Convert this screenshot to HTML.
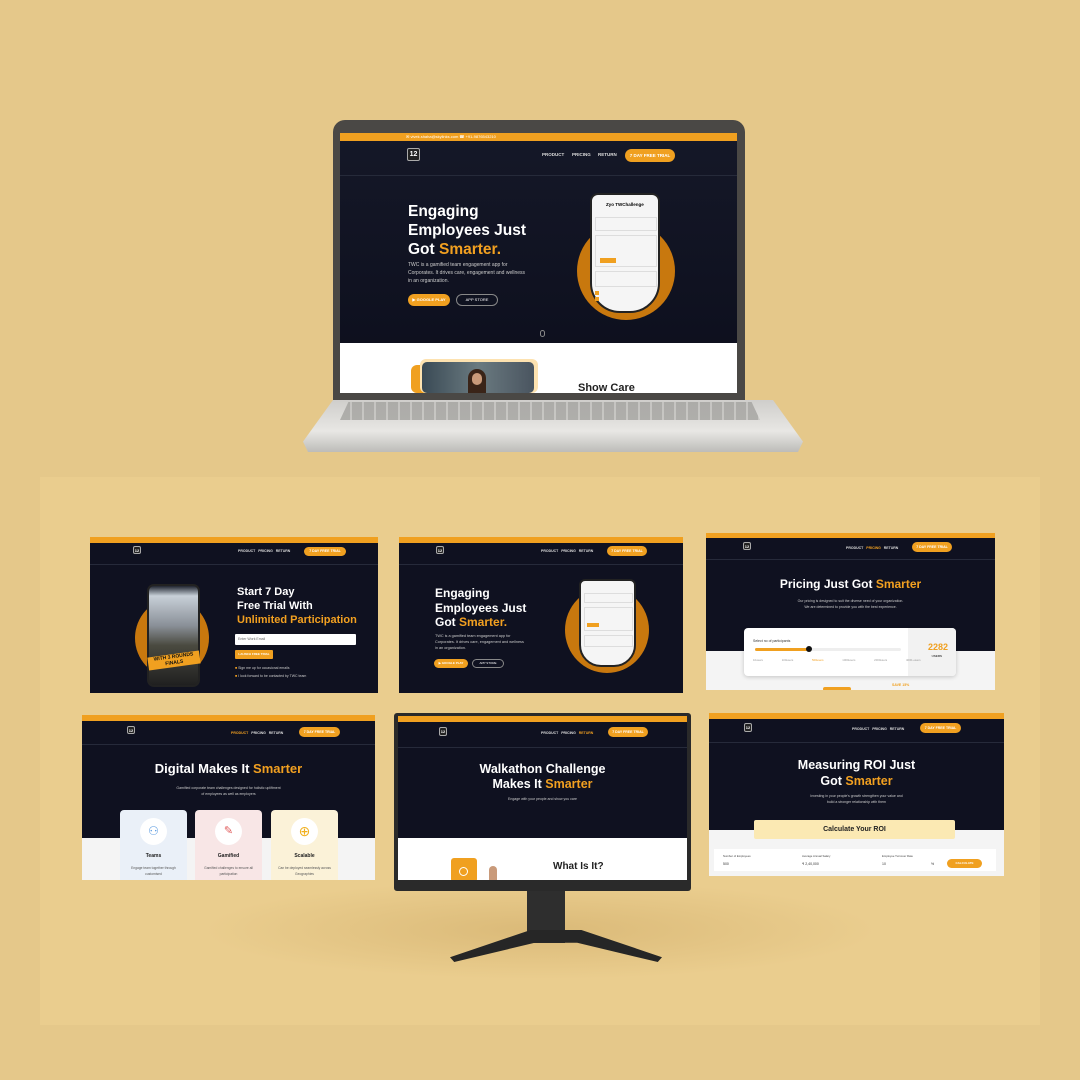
<!DOCTYPE html>
<html><head><meta charset="utf-8"><style>
*{margin:0;padding:0;box-sizing:border-box}
body{width:1080px;height:1080px;background:#e5c88a;position:relative;overflow:hidden;font-family:"Liberation Sans",sans-serif}
.a{position:absolute}
.scr{position:absolute;background:#0f1120;overflow:hidden}
.bar{position:absolute;left:0;top:0;width:100%;background:#f0a020}
.nav{position:absolute;left:0;width:100%;border-bottom:1px solid #262a3a}
.logo{position:absolute;border:1px solid #aaa;border-radius:2px;background:#222;color:#fff;font-weight:bold;text-align:center}
.lk{position:absolute;color:#ddd;font-weight:bold}
.btn{position:absolute;background:#f0a020;border-radius:10px;color:#fff;font-weight:bold;text-align:center}
.h{position:absolute;color:#fff;font-weight:bold;white-space:nowrap}
.o{color:#f2a020}
.p{position:absolute;color:#ccc;white-space:nowrap}
.wh{position:absolute;left:0;width:100%;background:#f4f4f4}
.circ{position:absolute;border-radius:50%;background:#c8780e}
.ph{position:absolute;background:#f5f5f5;border:2px solid #222;border-radius:6px}
</style></head><body>
<div class="a" style="left:40px;top:477px;width:1000px;height:548px;background:#eacd8e"></div>
<div class="a" style="left:200px;top:880px;width:680px;height:100px;background:radial-gradient(ellipse at center,rgba(190,150,80,.35),rgba(0,0,0,0) 70%)"></div>

<!-- LAPTOP -->
<div class="a" style="left:333px;top:120px;width:412px;height:286px;background:#4a4845;border-radius:12px 12px 4px 4px"></div>
<div class="scr" style="left:340px;top:133px;width:397px;height:260px;background:linear-gradient(#151828,#0c0e1c)">
 <div class="bar" style="height:8px"></div>
 <div class="p" style="left:66px;top:1px;font-size:4px;color:#fff">✉ vivek.shaha@skylinks.com ☎ +91-9876543210</div>
 <div class="nav" style="top:8px;height:35px"></div>
 <div class="logo" style="left:67px;top:15px;width:13px;height:13px;font-size:7px;line-height:11px">12</div>
 <div class="lk" style="left:202px;top:19px;font-size:4.5px">PRODUCT</div>
 <div class="lk" style="left:232px;top:19px;font-size:4.5px">PRICING</div>
 <div class="lk" style="left:258px;top:19px;font-size:4.5px">RETURN</div>
 <div class="btn" style="left:285px;top:16px;width:50px;height:13px;font-size:4.5px;line-height:13px">7 DAY FREE TRIAL</div>
 <div class="h" style="left:68px;top:69px;font-size:15.5px;line-height:19px">Engaging<br>Employees Just<br>Got <span class="o">Smarter.</span></div>
 <div class="p" style="left:68px;top:128px;font-size:5px;line-height:8px">TWC is a gamified team engagement app for<br>Corporates. It drives care, engagement and wellness<br>in an organization.</div>
 <div class="btn" style="left:68px;top:161px;width:42px;height:12px;font-size:4px;line-height:12px">▶ GOOGLE PLAY</div>
 <div class="a" style="left:116px;top:161px;width:42px;height:12px;border:1px solid #888;border-radius:7px;color:#fff;font-size:4px;line-height:10px;text-align:center"> APP STORE</div>
 <div class="circ" style="left:237px;top:89px;width:98px;height:98px"></div>
 <div class="ph" style="left:250px;top:60px;width:70px;height:120px;border-radius:8px 8px 30px 30px">
  <div class="a" style="left:14px;top:7px;font-size:4.5px;font-weight:bold">Zyo TWChallenge</div>
  <div class="a" style="left:3px;top:22px;width:62px;height:14px;border:1px solid #ddd"></div>
  <div class="a" style="left:3px;top:40px;width:62px;height:32px;border:1px solid #ddd"><div class="a" style="left:4px;top:22px;width:16px;height:5px;background:#f0a020"></div></div>
  <div class="a" style="left:3px;top:76px;width:62px;height:16px;border:1px solid #ddd"></div>
  <div class="a" style="left:3px;top:96px;width:4px;height:4px;background:#f0a020"></div>
  <div class="a" style="left:3px;top:102px;width:4px;height:4px;background:#f0a020"></div>
 </div>
 <div class="a" style="left:200px;top:197px;width:5px;height:7px;border:1px solid #888;border-radius:3px"></div>
 <div class="wh" style="top:210px;height:50px;background:#fff"></div>
 <div class="a" style="left:71px;top:232px;width:30px;height:28px;background:#f0a020;border-radius:6px"></div>
 <div class="a" style="left:80px;top:226px;width:118px;height:34px;background:#fde2b0;border-radius:6px"></div>
 <div class="a" style="left:82px;top:229px;width:112px;height:31px;background:linear-gradient(90deg,#3a4a55,#6a7a80,#4a5560);border-radius:5px"></div>
 <div class="a" style="left:128px;top:236px;width:18px;height:24px;background:#3a2418;border-radius:9px 9px 0 0"></div>
 <div class="a" style="left:132px;top:240px;width:10px;height:12px;background:#c99a7a;border-radius:5px"></div>
 <div class="h" style="left:238px;top:249px;font-size:11px;color:#222">Show Care</div>
</div>
<div class="a" style="left:303px;top:400px;width:500px;height:52px;background:linear-gradient(#cfcecb,#e8e7e4 60%,#bdbcb9);clip-path:polygon(6% 0,94% 0,100% 80%,99% 100%,1% 100%,0 80%)"></div>
<div class="a" style="left:340px;top:402px;width:420px;height:18px;background:repeating-linear-gradient(90deg,#a3a29f 0 10px,#c2c1be 10px 12px);clip-path:polygon(2% 0,98% 0,100% 100%,0 100%);opacity:.8"></div>

<!-- PANEL 1 -->
<div class="scr" style="left:90px;top:537px;width:288px;height:156px">
 <div class="bar" style="height:6px"></div>
 <div class="nav" style="top:6px;height:22px"></div>
 <div class="logo" style="left:43px;top:9px;width:8px;height:8px;font-size:4px;line-height:7px">12</div>
 <div class="lk" style="left:148px;top:12px;font-size:3.5px">PRODUCT&nbsp;&nbsp; PRICING&nbsp;&nbsp; RETURN</div>
 <div class="btn" style="left:214px;top:10px;width:42px;height:9px;font-size:3.5px;line-height:9px">7 DAY FREE TRIAL</div>
 <div class="circ" style="left:45px;top:62px;width:74px;height:78px"></div>
 <div class="a" style="left:57px;top:47px;width:53px;height:103px;background:linear-gradient(#202530,#c8d0d8 10%,#8a9098 40%,#4a4a40 60%,#202020);border:2px solid #222;border-radius:7px"></div>
 <div class="a" style="left:58px;top:117px;width:52px;height:13px;background:#f0a020;transform:rotate(-8deg);font-size:5px;font-weight:bold;color:#111;text-align:center;line-height:6px">WITH 3 ROUNDS<br>FINALS</div>
 <div class="h" style="left:147px;top:48px;font-size:11px;line-height:14px">Start 7 Day<br>Free Trial With<br><span class="o">Unlimited Participation</span></div>
 <div class="a" style="left:145px;top:97px;width:121px;height:11px;background:#fff;border-radius:1px;font-size:3.5px;color:#666;padding:3px 3px">Enter Work Email</div>
 <div class="btn" style="left:145px;top:113px;width:38px;height:9px;border-radius:1px;font-size:3px;line-height:9px">LAUNCH FREE TRIAL</div>
 <div class="p" style="left:145px;top:127px;font-size:3.5px;line-height:8px"><span class="o">■</span> Sign me up for occasional emails<br><span class="o">■</span> I look forward to be contacted by TWC team</div>
</div>

<!-- PANEL 2 -->
<div class="scr" style="left:399px;top:537px;width:284px;height:156px">
 <div class="bar" style="height:6px"></div>
 <div class="nav" style="top:6px;height:22px"></div>
 <div class="logo" style="left:37px;top:9px;width:8px;height:8px;font-size:4px;line-height:7px">12</div>
 <div class="lk" style="left:142px;top:12px;font-size:3.5px">PRODUCT&nbsp;&nbsp; PRICING&nbsp;&nbsp; RETURN</div>
 <div class="btn" style="left:208px;top:9px;width:40px;height:10px;font-size:3.5px;line-height:10px">7 DAY FREE TRIAL</div>
 <div class="h" style="left:36px;top:49px;font-size:12px;line-height:14.5px">Engaging<br>Employees Just<br>Got <span class="o">Smarter.</span></div>
 <div class="p" style="left:36px;top:96px;font-size:3.8px;line-height:6px">TWC is a gamified team engagement app for<br>Corporates. It drives care, engagement and wellness<br>in an organization.</div>
 <div class="btn" style="left:35px;top:122px;width:34px;height:9px;font-size:3px;line-height:9px">▶ GOOGLE PLAY</div>
 <div class="a" style="left:73px;top:122px;width:32px;height:9px;border:1px solid #888;border-radius:5px;color:#fff;font-size:3px;line-height:7px;text-align:center"> APP STORE</div>
 <div class="circ" style="left:166px;top:50px;width:84px;height:86px"></div>
 <div class="ph" style="left:180px;top:42px;width:57px;height:88px;border-radius:6px 6px 22px 22px">
  <div class="a" style="left:3px;top:12px;width:49px;height:10px;border:1px solid #ddd"></div>
  <div class="a" style="left:3px;top:26px;width:49px;height:24px;border:1px solid #ddd"><div class="a" style="left:2px;top:15px;width:12px;height:4px;background:#f0a020"></div></div>
  <div class="a" style="left:3px;top:54px;width:49px;height:12px;border:1px solid #ddd"></div>
 </div>
</div>

<!-- PANEL 3 -->
<div class="scr" style="left:706px;top:533px;width:289px;height:157px">
 <div class="bar" style="height:5px"></div>
 <div class="nav" style="top:5px;height:22px"></div>
 <div class="logo" style="left:37px;top:9px;width:8px;height:8px;font-size:4px;line-height:7px">12</div>
 <div class="lk" style="left:140px;top:13px;font-size:3.5px">PRODUCT&nbsp;&nbsp; <span class="o">PRICING</span>&nbsp;&nbsp; RETURN</div>
 <div class="btn" style="left:206px;top:9px;width:40px;height:10px;font-size:3.5px;line-height:10px">7 DAY FREE TRIAL</div>
 <div class="h" style="left:0;width:100%;text-align:center;top:44px;font-size:12px">Pricing Just Got <span class="o">Smarter</span></div>
 <div class="p" style="left:0;width:100%;text-align:center;top:66px;font-size:3.5px;line-height:5.5px">Our pricing is designed to suit the diverse need of your organization.<br>We are determined to provide you with the best experience.</div>
 <div class="wh" style="top:118px;height:40px"></div>
 <div class="a" style="left:38px;top:95px;width:212px;height:48px;background:#fff;border-radius:4px;box-shadow:0 1px 4px rgba(0,0,0,.2)">
  <div class="a" style="right:0;top:0;width:48px;height:48px;background:#f2f2f2;border-radius:0 4px 4px 0"></div>
  <div class="a" style="right:8px;top:14px;font-size:9px;font-weight:bold;color:#f0a020">2282</div>
  <div class="a" style="right:14px;top:26px;font-size:3px;font-weight:bold;color:#444">USERS</div>
  <div class="a" style="left:9px;top:11px;font-size:3.5px;color:#333">Select no of participants</div>
  <div class="a" style="left:11px;top:20px;width:146px;height:3px;background:#eee;border-radius:2px"></div>
  <div class="a" style="left:11px;top:20px;width:53px;height:3px;background:#f0a020;border-radius:2px"></div>
  <div class="a" style="left:62px;top:18px;width:6px;height:6px;background:#111;border-radius:50%"></div>
  <div class="a" style="left:9px;top:30px;font-size:2.8px;color:#999;word-spacing:18px;white-space:nowrap">10users 100users <span class="o">500users</span> 1000users 2000users 4000+users</div>
 </div>
 <div class="a" style="left:117px;top:154px;width:28px;height:4px;background:#f0a020;border-radius:2px"></div>
 <div class="a" style="left:186px;top:150px;font-size:3.5px;color:#f0a020;font-weight:bold">SAVE 15%</div>
</div>

<!-- PANEL 4 -->
<div class="scr" style="left:82px;top:715px;width:293px;height:165px">
 <div class="bar" style="height:6px"></div>
 <div class="nav" style="top:6px;height:24px"></div>
 <div class="logo" style="left:45px;top:11px;width:8px;height:8px;font-size:4px;line-height:7px">12</div>
 <div class="lk" style="left:149px;top:16px;font-size:3.5px"><span class="o">PRODUCT</span>&nbsp;&nbsp; PRICING&nbsp;&nbsp; RETURN</div>
 <div class="btn" style="left:217px;top:12px;width:41px;height:10px;font-size:3.5px;line-height:10px">7 DAY FREE TRIAL</div>
 <div class="h" style="left:0;width:100%;text-align:center;top:46px;font-size:13px">Digital Makes It <span class="o">Smarter</span></div>
 <div class="p" style="left:0;width:100%;text-align:center;top:71px;font-size:3.5px;line-height:5.5px">Gamified corporate team challenges designed for holistic upliftment<br>of employees as well as employers</div>
 <div class="wh" style="top:123px;height:45px"></div>
 <div class="a" style="left:38px;top:95px;width:67px;height:75px;background:#eaf0f8;border-radius:4px"></div>
 <div class="a" style="left:113px;top:95px;width:67px;height:75px;background:#f8e6e6;border-radius:4px"></div>
 <div class="a" style="left:189px;top:95px;width:67px;height:75px;background:#fbf2d8;border-radius:4px"></div>
 <div class="a" style="left:58px;top:103px;width:27px;height:27px;border-radius:50%;background:#fff;color:#5b9be0;font-size:12px;text-align:center;line-height:27px">⚇</div>
 <div class="a" style="left:133px;top:103px;width:27px;height:27px;border-radius:50%;background:#fff;color:#e05a5a;font-size:11px;text-align:center;line-height:27px">✎</div>
 <div class="a" style="left:209px;top:103px;width:27px;height:27px;border-radius:50%;background:#fff;color:#f0b020;font-size:14px;text-align:center;line-height:27px">⊕</div>
 <div class="a" style="left:38px;top:138px;width:67px;text-align:center;font-size:5px;font-weight:bold;color:#222">Teams</div>
 <div class="a" style="left:113px;top:138px;width:67px;text-align:center;font-size:5px;font-weight:bold;color:#222">Gamified</div>
 <div class="a" style="left:189px;top:138px;width:67px;text-align:center;font-size:5px;font-weight:bold;color:#222">Scalable</div>
 <div class="a" style="left:42px;top:150px;width:59px;text-align:center;font-size:3.3px;color:#555;line-height:6px">Engage team together through customised</div>
 <div class="a" style="left:117px;top:150px;width:59px;text-align:center;font-size:3.3px;color:#555;line-height:6px">Gamified challenges to ensure all participation</div>
 <div class="a" style="left:193px;top:150px;width:59px;text-align:center;font-size:3.3px;color:#555;line-height:6px">Can be deployed seamlessly across Geographies</div>
</div>

<!-- MONITOR -->
<div class="a" style="left:527px;top:888px;width:38px;height:55px;background:#2e2e2e"></div>
<div class="a" style="left:450px;top:930px;width:212px;height:32px;background:#262626;clip-path:polygon(38% 0,62% 0,100% 85%,98% 100%,60% 40%,40% 40%,2% 100%,0 85%)"></div>
<div class="a" style="left:394px;top:713px;width:297px;height:178px;background:#2a2a2a;border-radius:3px"></div>
<div class="scr" style="left:398px;top:716px;width:289px;height:164px">
 <div class="bar" style="height:6px"></div>
 <div class="nav" style="top:6px;height:26px"></div>
 <div class="logo" style="left:41px;top:11px;width:8px;height:9px;font-size:4px;line-height:8px">12</div>
 <div class="lk" style="left:143px;top:15px;font-size:3.5px">PRODUCT&nbsp;&nbsp; PRICING&nbsp;&nbsp; <span class="o">RETURN</span></div>
 <div class="btn" style="left:210px;top:11px;width:40px;height:10px;font-size:3.5px;line-height:10px">7 DAY FREE TRIAL</div>
 <div class="h" style="left:0;width:100%;text-align:center;top:46px;font-size:12.5px;line-height:15px">Walkathon Challenge<br>Makes It <span class="o">Smarter</span></div>
 <div class="p" style="left:0;width:100%;text-align:center;top:81px;font-size:3.5px">Engage with your people and show you care</div>
 <div class="wh" style="top:122px;height:42px;background:#fff"></div>
 <div class="a" style="left:53px;top:142px;width:26px;height:24px;background:#f0a020;border-radius:3px"></div>
 <div class="a" style="left:61px;top:151px;width:9px;height:9px;border:1px solid #fff;border-radius:50%"></div>
 <div class="a" style="left:91px;top:150px;width:8px;height:14px;background:#c99a7a;border-radius:4px 4px 0 0"></div>
 <div class="h" style="left:155px;top:145px;font-size:10px;color:#222">What Is It?</div>
</div>

<!-- PANEL 6 -->
<div class="scr" style="left:709px;top:713px;width:295px;height:163px">
 <div class="bar" style="height:6px"></div>
 <div class="nav" style="top:6px;height:24px"></div>
 <div class="logo" style="left:35px;top:10px;width:8px;height:9px;font-size:4px;line-height:8px">12</div>
 <div class="lk" style="left:143px;top:14px;font-size:3.5px">PRODUCT&nbsp;&nbsp; PRICING&nbsp;&nbsp; RETURN</div>
 <div class="btn" style="left:211px;top:10px;width:41px;height:10px;font-size:3.5px;line-height:10px">7 DAY FREE TRIAL</div>
 <div class="h" style="left:0;width:100%;text-align:center;top:45px;font-size:12.5px;line-height:15.5px">Measuring ROI Just<br>Got <span class="o">Smarter</span></div>
 <div class="p" style="left:0;width:100%;text-align:center;top:81px;font-size:3.5px;line-height:5.5px">Investing in your people's growth strengthen your value and<br>build a stronger relationship with them</div>
 <div class="wh" style="top:117px;height:46px"></div>
 <div class="a" style="left:45px;top:107px;width:201px;height:19px;background:#fbe9b3;border-radius:2px;text-align:center;font-size:7px;font-weight:bold;color:#222;line-height:19px">Calculate Your ROI</div>
 <div class="a" style="left:5px;top:136px;width:282px;height:22px;background:#fff"></div>
 <div class="a" style="left:14px;top:141px;font-size:2.8px;color:#444">Number of Employees</div>
 <div class="a" style="left:14px;top:149px;font-size:3.5px;color:#333">500</div>
 <div class="a" style="left:93px;top:141px;font-size:2.8px;color:#444">Average Annual Salary</div>
 <div class="a" style="left:93px;top:149px;font-size:3.5px;color:#333">₹ 2,40,000</div>
 <div class="a" style="left:173px;top:141px;font-size:2.8px;color:#444">Employee Turnover Rate</div>
 <div class="a" style="left:173px;top:149px;font-size:3.5px;color:#333">10</div>
 <div class="a" style="left:222px;top:149px;font-size:3.5px;color:#333">%</div>
 <div class="btn" style="left:238px;top:146px;width:35px;height:9px;font-size:3px;line-height:9px">CALCULATE</div>
</div>
</body></html>
